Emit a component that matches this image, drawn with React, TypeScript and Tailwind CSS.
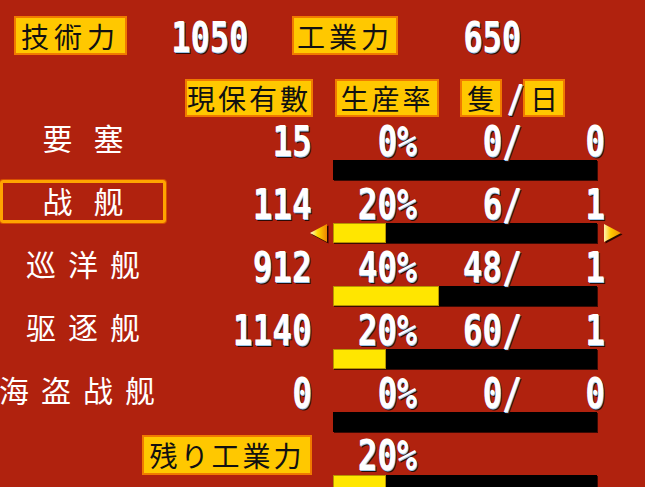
import type { ReactNode } from "react";
import clsx from "clsx";

type Row = {
  name: string;
  count: number;
  pct: number;
  ships: number;
  days: number;
  selected?: boolean;
};

const ROWS: Row[] = [
  { name: "要塞", count: 15, pct: 0, ships: 0, days: 0 },
  { name: "战舰", count: 114, pct: 20, ships: 6, days: 1, selected: true },
  { name: "巡洋舰", count: 912, pct: 40, ships: 48, days: 1 },
  { name: "驱逐舰", count: 1140, pct: 20, ships: 60, days: 1 },
  { name: "海盗战舰", count: 0, pct: 0, ships: 0, days: 0 },
];

const BAR_WIDTH = 264;

/** White digits with the blue edge and dark drop shadow of the game font. */
function Num({ children, className }: { children: ReactNode; className?: string }) {
  return (
    <span
      className={clsx(
        "inline-block origin-right scale-x-[0.76] whitespace-pre font-['DejaVu_Sans_Mono',monospace] font-bold leading-none text-white [text-shadow:1px_1px_0_#9cc8ec,2px_2px_0_#2a0a06]",
        className,
      )}
    >
      {children}
    </span>
  );
}

/** Yellow caption plate with black lettering. */
function Plate({ children, className }: { children: ReactNode; className?: string }) {
  return (
    <div
      className={clsx(
        "flex items-center justify-center whitespace-nowrap border-2 border-[#f07a00] bg-[#ffc800] font-['Noto_Sans_CJK_JP',sans-serif] text-[28px] leading-none text-[#111]",
        className,
      )}
    >
      {children}
    </div>
  );
}

function Arrow({ dir }: { dir: "left" | "right" }) {
  const pts = dir === "left" ? "18,1 1,10 18,19" : "1,1 18,10 1,19";
  const id = `arrow-${dir}`;
  return (
    <svg width="21" height="21" viewBox="0 0 21 21" aria-hidden="true">
      <defs>
        <linearGradient id={id} x1="0" y1="0" x2="1" y2="0">
          {dir === "left" ? (
            <>
              <stop offset="0" stopColor="#fffbe6" />
              <stop offset="0.45" stopColor="#ffd800" />
              <stop offset="1" stopColor="#f08400" />
            </>
          ) : (
            <>
              <stop offset="0" stopColor="#fff2b0" />
              <stop offset="0.4" stopColor="#ffc800" />
              <stop offset="1" stopColor="#f08c00" />
            </>
          )}
        </linearGradient>
      </defs>
      <polygon points={pts} transform="translate(1.5 1.5)" fill="#2a0800" />
      <polygon points={pts} fill={`url(#${id})`} />
    </svg>
  );
}

function Bar({ pct, arrows }: { pct: number; arrows?: boolean }) {
  return (
    <div className="flex h-[20px] items-center">
      <div className="ml-[309px] w-[24px]">{arrows ? <Arrow dir="left" /> : null}</div>
      <div className="h-[20px] w-[264px] bg-black shadow-[1px_1px_0_#3a0a04]">
        <div
          className="h-full bg-[#ffe600] shadow-[inset_0_0_0_1px_#b89400]"
          style={{ width: (BAR_WIDTH * pct) / 100 }}
        />
      </div>
      <div className="w-[26px] pl-[6px]">{arrows ? <Arrow dir="right" /> : null}</div>
    </div>
  );
}

function Cell({ children }: { children: ReactNode }) {
  return (
    <div className="flex h-[43px] items-end justify-end">
      <Num className="translate-y-[3px] text-[43px]">{children}</Num>
    </div>
  );
}

function labelSpacing(name: string) {
  if (name.length === 2) return "pl-[21px] tracking-[21px]";
  if (name.length === 3) return "pl-[12px] tracking-[12px]";
  return "tracking-[12px]";
}

function ShipRow({ row }: { row: Row }) {
  return (
    <div>
      <div className="grid grid-cols-[166px_146px_105px_105px_83px]">
        <div
          className={clsx(
            "flex h-[43px] items-center justify-center",
            row.selected && "rounded-[3px] border-[3px] border-[#ffa400] shadow-[0_0_0_1px_#d85000]",
          )}
        >
          <span
            className={clsx(
              "-translate-y-[2px] whitespace-nowrap font-['Noto_Sans_CJK_SC',sans-serif] text-[30px] leading-none text-white",
              labelSpacing(row.name),
            )}
          >
            {row.name}
          </span>
        </div>
        <Cell>{row.count}</Cell>
        <Cell>{row.pct}%</Cell>
        <Cell>{row.ships}/</Cell>
        <Cell>{row.days}</Cell>
      </div>
      <Bar pct={row.pct} arrows={row.selected} />
    </div>
  );
}

export default function App() {
  return (
    <div className="h-[487px] w-[645px] overflow-hidden bg-[#b0220e]">
      {/* 技術力 / 工業力 */}
      <div className="mt-[16px] flex h-[39px] items-center">
        <Plate className="ml-[14px] h-[39px] w-[113px] tracking-[5px]">技術力</Plate>
        <div className="flex w-[121px] justify-end">
          <Num className="translate-y-[2px] text-[42px]">1050</Num>
        </div>
        <Plate className="ml-[44px] h-[39px] w-[106px] tracking-[4px]">工業力</Plate>
        <div className="flex w-[123px] justify-end">
          <Num className="translate-y-[2px] text-[42px]">650</Num>
        </div>
      </div>

      {/* column captions */}
      <div className="mt-[24px] flex h-[38px] items-center">
        <Plate className="ml-[185px] h-[38px] w-[128px] tracking-[3px]">現保有數</Plate>
        <Plate className="ml-[22px] h-[38px] w-[104px] tracking-[3px]">生産率</Plate>
        <Plate className="ml-[21px] h-[38px] w-[42px]">隻</Plate>
        <div className="flex h-[38px] w-[21px] items-center justify-center">
          <Num className="origin-center text-[38px]">/</Num>
        </div>
        <Plate className="h-[38px] w-[42px]">日</Plate>
      </div>

      {ROWS.map((row) => (
        <ShipRow key={row.name} row={row} />
      ))}

      {/* 残り工業力 */}
      <div className="grid grid-cols-[166px_146px_105px]">
        <div className="col-span-2 flex h-[43px] items-end justify-end">
          <Plate className="h-[40px] w-[170px] tracking-[3px]">残り工業力</Plate>
        </div>
        <div className="flex h-[43px] items-end justify-end">
          <Num className="translate-y-[2px] text-[43px]">20%</Num>
        </div>
      </div>
      <Bar pct={20} />
    </div>
  );
}
